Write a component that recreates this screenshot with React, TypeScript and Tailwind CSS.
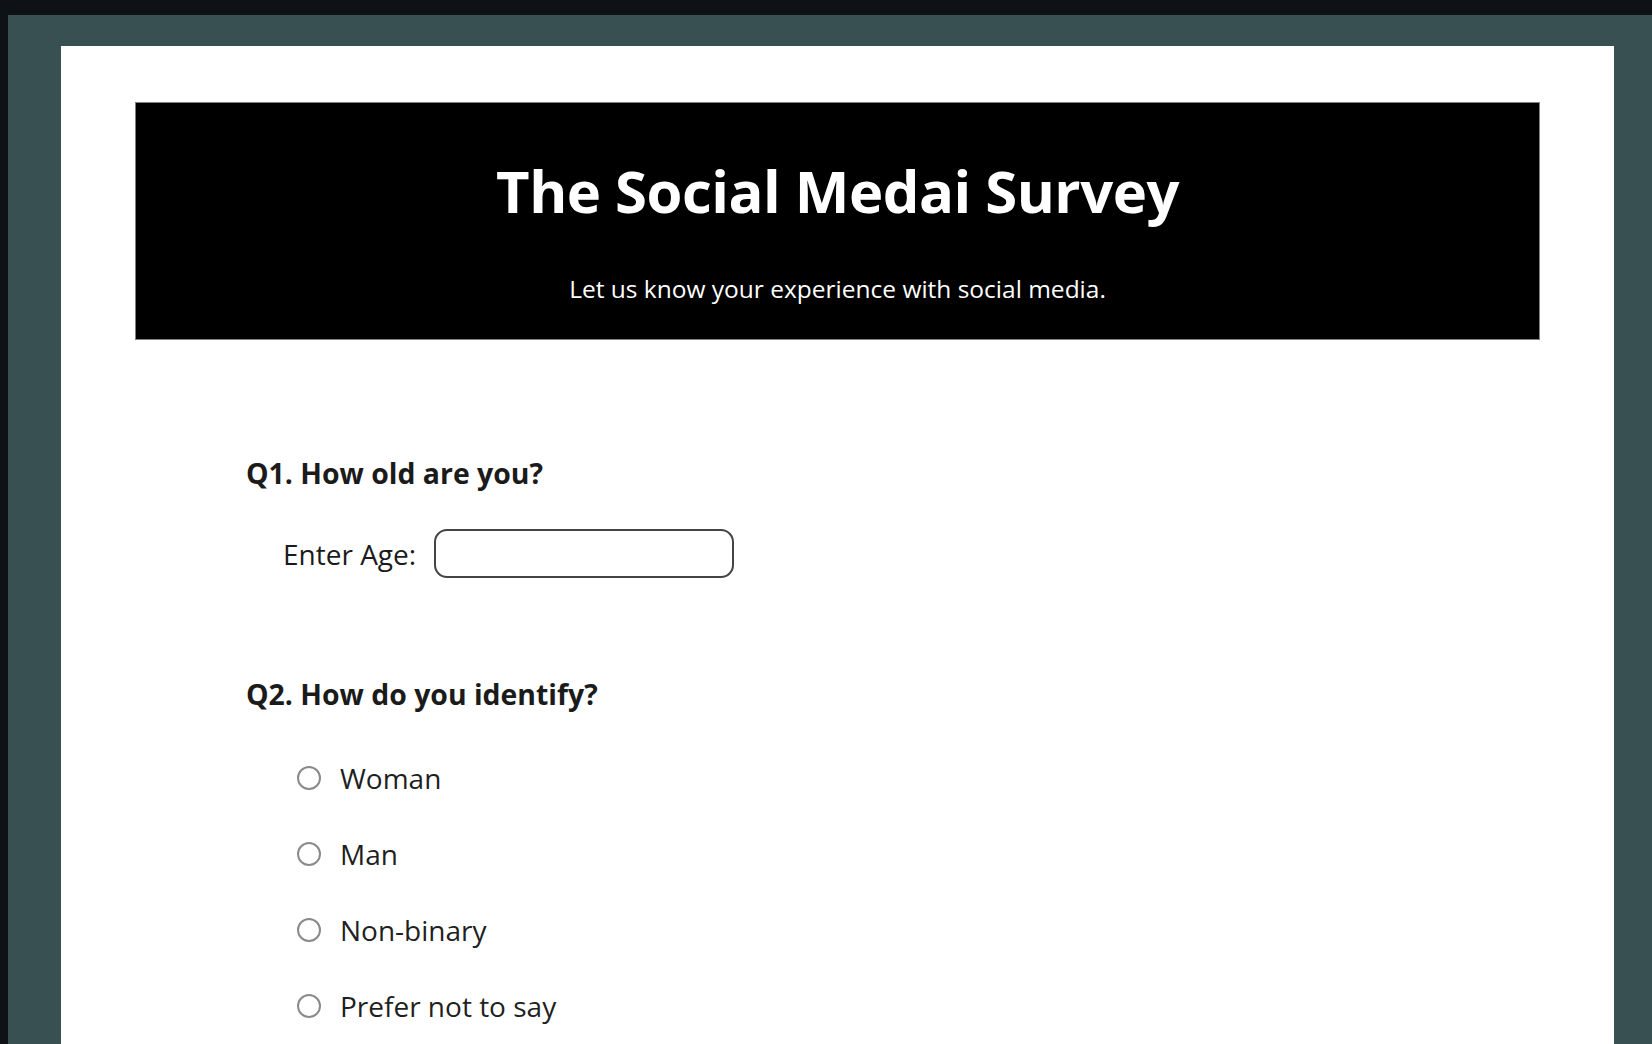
import React from "react";

const font = { fontFamily: '"Open Sans", "Noto Sans", "Liberation Sans", sans-serif' };

const options = ["Woman", "Man", "Non-binary", "Prefer not to say"];

function Radio() {
  return (
    <span className="inline-block size-[24px] shrink-0 rounded-full border-2 border-[#8a8a8a] bg-white" />
  );
}

export default function App() {
  return (
    <div className="h-[1044px] overflow-hidden bg-[#0e1116] pt-[15px] pl-[8px]" style={font}>
      <div className="h-full bg-[#395052] pt-[31px] pl-[53px] pr-[38px]">
        <div className="h-full bg-white px-[74px] pt-[56px]">
          <header className="flex h-[238px] flex-col items-center border border-[#808080] bg-black pt-[52px] text-white">
            <h1 className="text-[58px] leading-[72px] font-bold tracking-[-0.5px]">The Social Medai Survey</h1>
            <p className="mt-[46px] text-[24.5px] leading-[32px]">Let us know your experience with social media.</p>
          </header>

          <form className="pl-[111px] pt-[115px] text-[#1b1b1b]">
            <section>
              <h2 className="text-[28.4px] leading-[36px] font-bold">Q1. How old are you?</h2>
              <div className="mt-[38px] flex items-center gap-[18px] pl-[37px]">
                <label htmlFor="age" className="text-[28px]">Enter Age:</label>
                <input id="age" type="text" className="h-[49px] w-[300px] rounded-[13px] border-2 border-[#444] px-3" />
              </div>
            </section>

            <section className="mt-[98px]">
              <h2 className="text-[28.4px] leading-[36px] font-bold">Q2. How do you identify?</h2>
              <ul className="mt-[48px] flex flex-col gap-[40px] pl-[51px]">
                {options.map((o) => (
                  <li key={o} className="flex h-[36px] items-center gap-[19px]">
                    <Radio />
                    <span className="text-[28px] text-[#1f1f1f]">{o}</span>
                  </li>
                ))}
              </ul>
            </section>
          </form>
        </div>
      </div>
    </div>
  );
}
